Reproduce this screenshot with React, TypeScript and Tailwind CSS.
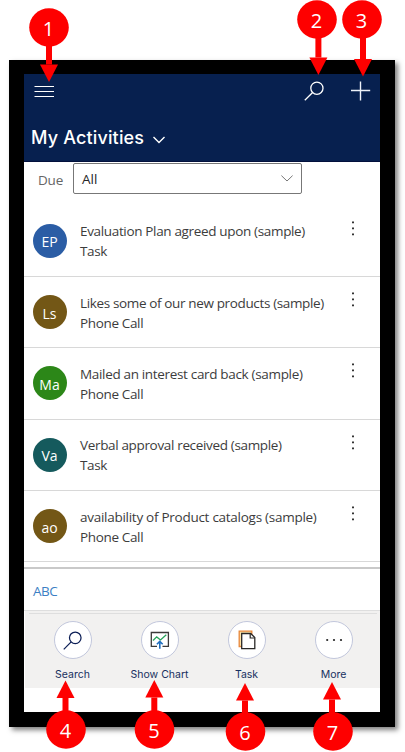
type Activity = { initials: string; title: string; kind: string; color: string; tracking: string };

const activities: Activity[] = [
  { initials: "EP", title: "Evaluation Plan agreed upon (sample)", kind: "Task", color: "bg-[#2b5da5]", tracking: "tracking-[-0.34px]" },
  { initials: "Ls", title: "Likes some of our new products (sample)", kind: "Phone Call", color: "bg-[#735716]", tracking: "tracking-[-0.36px]" },
  { initials: "Ma", title: "Mailed an interest card back (sample)", kind: "Phone Call", color: "bg-[#2c8718]", tracking: "tracking-[-0.33px]" },
  { initials: "Va", title: "Verbal approval received (sample)", kind: "Task", color: "bg-[#155a5d]", tracking: "tracking-[-0.34px]" },
  { initials: "ao", title: "availability of Product catalogs (sample)", kind: "Phone Call", color: "bg-[#735716]", tracking: "tracking-[-0.27px]" },
];

function SearchGlyph({ className }: { className: string }) {
  return (
    <svg className={className} viewBox="0 0 20 20" fill="none" stroke="currentColor" strokeWidth="1.3">
      <circle cx="12.9" cy="7.2" r="6.1" />
      <path d="M8.6 11.5 0.8 19.3" />
    </svg>
  );
}

function ChartGlyph() {
  return (
    <svg className="h-[18px] w-5" viewBox="0 0 20 18" fill="none">
      <path d="M7 15.4H1.3V1.5H18.4V15.4H12.5" stroke="#3b3a39" strokeWidth="1.3" />
      <path d="M3 9.5 6.7 5.9 10.5 9 16.3 3.7" stroke="#27a35a" strokeWidth="1.3" />
      <path d="M9.8 17.8V10.4M6.9 13.3 9.8 10.4 12.7 13.3" stroke="#1f6fc0" strokeWidth="1.6" />
    </svg>
  );
}

function TaskGlyph() {
  return (
    <svg className="h-5 w-[18px]" viewBox="0 0 18 20" fill="none">
      <path d="M1.2 1.2H13.8V4H4.2V16.5H1.2Z" fill="#fbe3a8" stroke="#e8873a" strokeWidth="1.3" />
      <path d="M3.7 3.5H12.7L16.8 7.6V18.7H3.7Z" fill="white" stroke="#292827" strokeWidth="1.3" />
      <path d="M12.2 3.8V8H16.5" stroke="#292827" strokeWidth="1.2" />
    </svg>
  );
}

function MoreGlyph() {
  return (
    <svg className="h-1 w-5" viewBox="0 0 20 4" fill="#222">
      <circle cx="3.2" cy="2" r="1.1" />
      <circle cx="10" cy="2" r="1.1" />
      <circle cx="17" cy="2" r="1.1" />
    </svg>
  );
}

function Header() {
  return (
    <header className="flex h-[88px] shrink-0 flex-col border-b border-[#02103c] bg-[#07204f] text-white">
      <div className="flex h-[34px] items-center pr-[9px] pl-2.5">
        <svg className="h-3 w-5" viewBox="0 0 20 12" stroke="white" strokeWidth="1.2">
          <path d="M.5 1.5H20M.5 6.5H20M.5 11.5H20" />
        </svg>
        <SearchGlyph className="mr-[27px] ml-auto size-5" />
        <svg className="size-5" viewBox="0 0 20 20" stroke="#edf1f8" strokeWidth="1.4">
          <path d="M9.5 .4V19.6M0 9.5H19.2" />
        </svg>
      </div>
      <div className="flex flex-1 items-center pt-[7px] pl-[7px]">
        <h1 className="font-[Inter,sans-serif] text-[18px] leading-6 font-medium tracking-[0.15px]">My Activities</h1>
        <svg className="mt-1 ml-[9px] h-2 w-3" viewBox="0 0 12 8" fill="none" stroke="white" strokeWidth="1.4">
          <path d="M.5 1 6 6.5 11.5 1" />
        </svg>
      </div>
    </header>
  );
}

function DueFilter() {
  return (
    <div className="flex h-[43.5px] shrink-0 items-start pt-px pl-[14px] text-[13.5px]">
      <span className="w-[35px] pt-[7px] leading-5 tracking-[-0.2px] text-[#666]">Due</span>
      <div className="flex h-[31px] w-[229px] items-center rounded-[2px] border border-[#777] pr-2 pl-2 pt-0.5 text-[#262626]">
        <span>All</span>
        <svg className="mb-0.5 ml-auto h-[7px] w-3" viewBox="0 0 12 7" fill="none" stroke="#777">
          <path d="M.4.6 6 6 11.6.6" />
        </svg>
      </div>
    </div>
  );
}

function ActivityRow({ item }: { item: Activity }) {
  return (
    <li className="flex h-[71.4px] shrink-0 items-center border-b border-[#d8d8d8] pl-[8.5px]">
      <div className={`flex size-[34px] items-center justify-center rounded-full pt-0.5 text-[14px] text-white ${item.color}`}>
        {item.initials}
      </div>
      <div className="ml-[13.5px] pt-px text-[13.5px] leading-5 whitespace-nowrap text-[#3c3c3c]">
        <div className={item.tracking}>{item.title}</div>
        <div className="tracking-[-0.35px]">{item.kind}</div>
      </div>
      <svg className="mr-[25px] mb-[26px] ml-auto h-4 w-1" viewBox="0 0 4 16" fill="#333">
        <path d="M1 1.5H3V3.3H1ZM1 7.5H3V9.3H1ZM1 13.5H3V15.3H1Z" />
      </svg>
    </li>
  );
}

function CommandBar() {
  const commands = [
    { label: "Search", icon: <SearchGlyph className="size-[19px] text-[#0b1d55]" /> },
    { label: "Show Chart", icon: <ChartGlyph /> },
    { label: "Task", icon: <TaskGlyph /> },
    { label: "More", icon: <MoreGlyph /> },
  ];
  return (
    <nav className="ml-px flex h-[75px] shrink-0 bg-[#f2f1f0] pl-1">
      {commands.map((c) => (
        <div key={c.label} className="flex w-[87px] flex-col items-center border-t border-[#dedede] pt-[7px]">
          <div className="flex size-[38px] items-center justify-center rounded-full border border-[#c2c7dc] bg-white">
            {c.icon}
          </div>
          <span className="mt-2 font-[Inter,sans-serif] text-[10.5px] leading-4 whitespace-nowrap text-[#17305f]">{c.label}</span>
        </div>
      ))}
    </nav>
  );
}

type Callout = { n: number; cx: number; cy: number; tipX: number; tipY: number };

const callouts: Callout[] = [
  { n: 1, cx: 49, cy: 27.5, tipX: 49, tipY: 82 },
  { n: 2, cx: 317, cy: 19.5, tipX: 318.4, tipY: 75 },
  { n: 3, cx: 362, cy: 19.5, tipX: 363, tipY: 76.5 },
  { n: 4, cx: 66, cy: 729.5, tipX: 65.5, tipY: 680.5 },
  { n: 5, cx: 154.5, cy: 729.5, tipX: 154.3, tipY: 680 },
  { n: 6, cx: 245.5, cy: 731.5, tipX: 245, tipY: 683 },
  { n: 7, cx: 333, cy: 731.5, tipX: 332, tipY: 682 },
];

function Callouts() {
  return (
    <svg className="pointer-events-none absolute inset-0 h-[752px] w-[405px]" viewBox="0 0 405 752">
      {callouts.map(({ n, cx, cy, tipX, tipY }) => {
        const base = tipY > cy ? tipY - 17.5 : tipY + 17.5;
        return (
          <g key={n} fill="#fe0000">
            <path d={`M${tipX} ${cy}V${base}`} stroke="#fe0000" strokeWidth="6" />
            <path d={`M${tipX - 9} ${base}H${tipX + 9}L${tipX} ${tipY}Z`} />
            <ellipse cx={cx} cy={cy} rx="19.8" ry="19.2" />
            <text x={cx - 0.5} y={cy + 8} textAnchor="middle" fill="white" fontSize="20">{n}</text>
          </g>
        );
      })}
    </svg>
  );
}

export default function App() {
  return (
    <div className="relative h-[752px] w-[405px] overflow-hidden bg-white pt-[60px] pl-[9px] font-['Open_Sans','Noto_Sans',sans-serif]">
      <main className="flex h-[667px] w-[386px] flex-col border-15 border-t-14 border-black bg-white shadow-[3px_3px_5px_rgba(0,0,0,0.5)]">
        <Header />
        <DueFilter />
        <ul className="flex h-[363.5px] shrink-0 flex-col border-b-2 border-[#c9c9c9]">
          {activities.map((item) => (
            <ActivityRow key={item.initials} item={item} />
          ))}
        </ul>
        <div className="flex h-[42px] shrink-0 items-center border-b border-[#dedede] pt-1 pl-[9px] text-[13.5px] tracking-[-0.5px] text-[#3c7fc4]">ABC</div>
        <div className="ml-px h-0.5 shrink-0 bg-[#f2f1f0]" />
        <CommandBar />
      </main>
      <Callouts />
    </div>
  );
}
